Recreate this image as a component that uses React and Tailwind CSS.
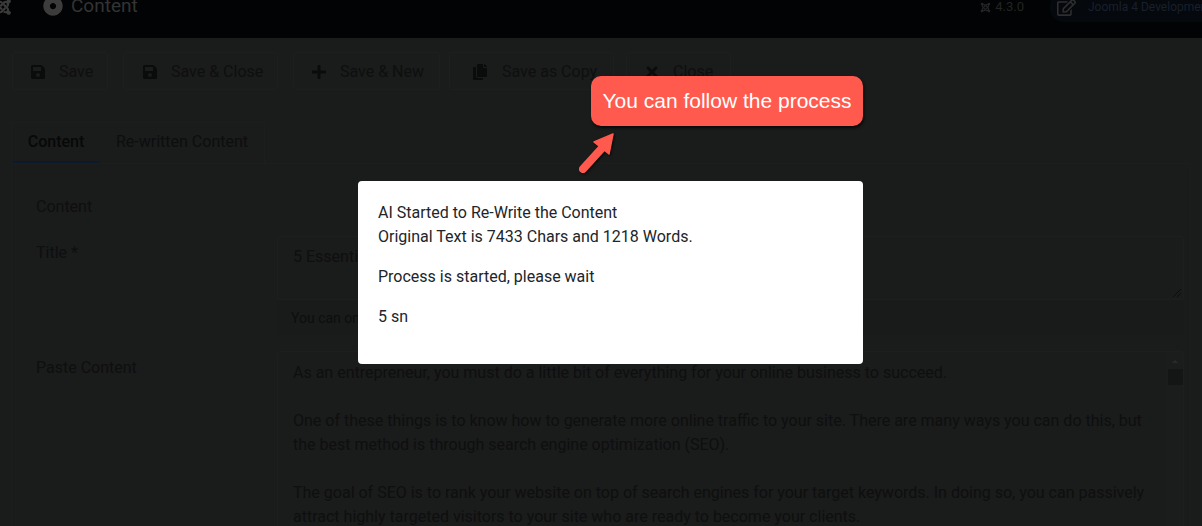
import { FaCopy, FaDotCircle, FaJoomla, FaPlus, FaRegEdit, FaSave, FaTimes } from "react-icons/fa";

const ToolbarButton = ({ icon, label, className }) => (
  <div
    className={`flex h-[38px] shrink-0 items-center rounded-[3px] border border-[#1d1e1e] pt-px text-[16px] text-[#0e0f0f] ${className}`}
  >
    <span className="flex w-[16px] justify-center text-[16px] text-[#0a0c0c]">{icon}</span>
    <span>{label}</span>
  </div>
);

const App = () => {
  return (
    <div className="relative h-[526px] w-[1202px] overflow-hidden bg-[#1a1b1b] font-['Roboto',sans-serif]">
      <header className="flex h-[38px] items-start justify-between bg-[#020304]">
        <div className="-mt-[6px] flex items-center">
          <FaJoomla className="-ml-[6px] mt-[2px] text-[18px] text-[#3a3a3a]" />
          <FaDotCircle className="ml-[31px] text-[20px] text-[#3c3c3c]" />
          <span className="ml-[8px] text-[19px] leading-[24px] text-[#333434]">Content</span>
        </div>
        <div className="-mt-[8px] flex items-center">
          <FaJoomla className="text-[11px] text-[#242424]" />
          <span className="ml-[4px] text-[13px] text-[#222323]">4.3.0</span>
          <div className="ml-[26px] flex h-[30px] w-[152px] items-center overflow-hidden rounded-l-[14px] bg-[#05080c] pl-[7px]">
            <FaRegEdit className="shrink-0 text-[19px] text-[#2e2e2e]" />
            <span className="ml-[12px] whitespace-nowrap text-[12px] text-[#18202c]">Joomla 4 Development</span>
          </div>
        </div>
      </header>

      <div className="flex pl-[12px] pt-[14px]">
        <ToolbarButton icon={<FaSave />} label="Save" className="w-[96px] gap-[13px] pl-[17px]" />
        <ToolbarButton icon={<FaSave />} label="Save & Close" className="ml-[15px] w-[155px] gap-[13px] pl-[18px]" />
        <ToolbarButton icon={<FaPlus />} label="Save & New" className="ml-[15px] w-[147px] gap-[13px] pl-[17px]" />
        <ToolbarButton icon={<FaCopy />} label="Save as Copy" className="ml-[9px] w-[165px] gap-[14px] pl-[22px]" />
        <ToolbarButton icon={<FaTimes />} label="Close" className="ml-[12px] w-[105px] gap-[13px] pl-[17px]" />
      </div>

      <div className="ml-[11px] mt-[32px] flex h-[41px] w-[254px] border border-b-0 border-[#1c1d1d] text-[16px] leading-[24px]">
        <div className="w-[88px] border-b-2 border-[#0b1a2e] pt-[7px] text-center font-medium text-[#070808]">Content</div>
        <div className="pl-[16px] pt-[7px] text-[#0d0e0e]">Re-written Content</div>
      </div>

      <div className="ml-[11px] h-[400px] w-[1180px] border border-[#1c1d1d] pl-[24px] pt-[31px] text-[16px] text-[#0e0f0f]">
        <div className="leading-[24px]">Content</div>
        <div className="mt-[17px] flex">
          <div className="w-[241px] pt-[5px] leading-[24px]">Title *</div>
          <div className="w-[907px]">
            <div className="relative h-[64px] rounded-t-[3px] border border-[#1d1e1e] pl-[15px] pt-[8px] leading-[24px]">
              5 Essential SEO Tips
              <svg className="absolute bottom-[1px] right-[1px]" width="10" height="10" viewBox="0 0 10 10">
                <path d="M1 9 L9 1 M5 9 L9 5" stroke="#0c0c0c" strokeWidth="1" />
              </svg>
            </div>
            <div className="h-[35px] rounded-b-[3px] bg-[#181b1a] pl-[14px] pt-[8px] text-[14px] leading-[20px] text-[#0c0e0d]">
              You can only change the title here
            </div>
          </div>
        </div>
        <div className="mt-[16px] flex">
          <div className="w-[241px] pt-[5px] leading-[24px]">Paste Content</div>
          <div className="relative h-[300px] w-[907px] rounded-[3px] border border-[#1d1e1e] pl-[15px] pr-[24px] pt-[9px] leading-[24px]">
            <p>As an entrepreneur, you must do a little bit of everything for your online business to succeed.</p>
            <p className="mt-[24px]">
              One of these things is to know how to generate more online traffic to your site. There are many ways you can do this, but the best method is through search engine optimization (SEO).
            </p>
            <p className="mt-[24px]">
              The goal of SEO is to rank your website on top of search engines for your target keywords. In doing so, you can passively attract highly targeted visitors to your site who are ready to become your clients.
            </p>
            <div className="absolute bottom-0 right-0 top-0 w-[16px] bg-[#1b1c1c]">
              <div className="mx-auto mt-[8px] h-0 w-0 border-x-[3px] border-b-[3px] border-x-transparent border-b-[#2a2a2a]" />
              <div className="mx-auto mt-[6px] h-[16px] w-[15px] bg-[#141515]" />
            </div>
          </div>
        </div>
      </div>

      <div className="absolute left-[358px] top-[181px] h-[183px] w-[505px] rounded-[4px] bg-white px-[20px] pt-[20px] text-[16px] leading-[24px] text-[#212529]">
        <p>
          AI Started to Re-Write the Content
          <br />
          Original Text is 7433 Chars and 1218 Words.
        </p>
        <p className="mt-[16px]">Process is started, please wait</p>
        <p className="mt-[16px]">5 sn</p>
      </div>

      <div className="absolute left-[591px] top-[76px] flex h-[50px] w-[272px] items-center justify-center rounded-[10px] bg-[#ff5a4d] font-['Liberation_Sans',sans-serif] text-[21px] text-white shadow-[1px_2px_3px_rgba(0,0,0,0.7)]">
        You can follow the process
      </div>

      <svg className="absolute left-[572px] top-[128px] drop-shadow-[1px_1px_1px_rgba(0,0,0,0.7)]" width="48" height="50" viewBox="0 0 48 50">
        <path d="M11 41 L31 19" stroke="#ff5a4d" strokeWidth="8" strokeLinecap="round" fill="none" />
        <path d="M41 6 L22 14 L37 26 Z" fill="#ff5a4d" stroke="#ff5a4d" strokeWidth="1.5" strokeLinejoin="round" />
      </svg>
    </div>
  );
};

export default App;
